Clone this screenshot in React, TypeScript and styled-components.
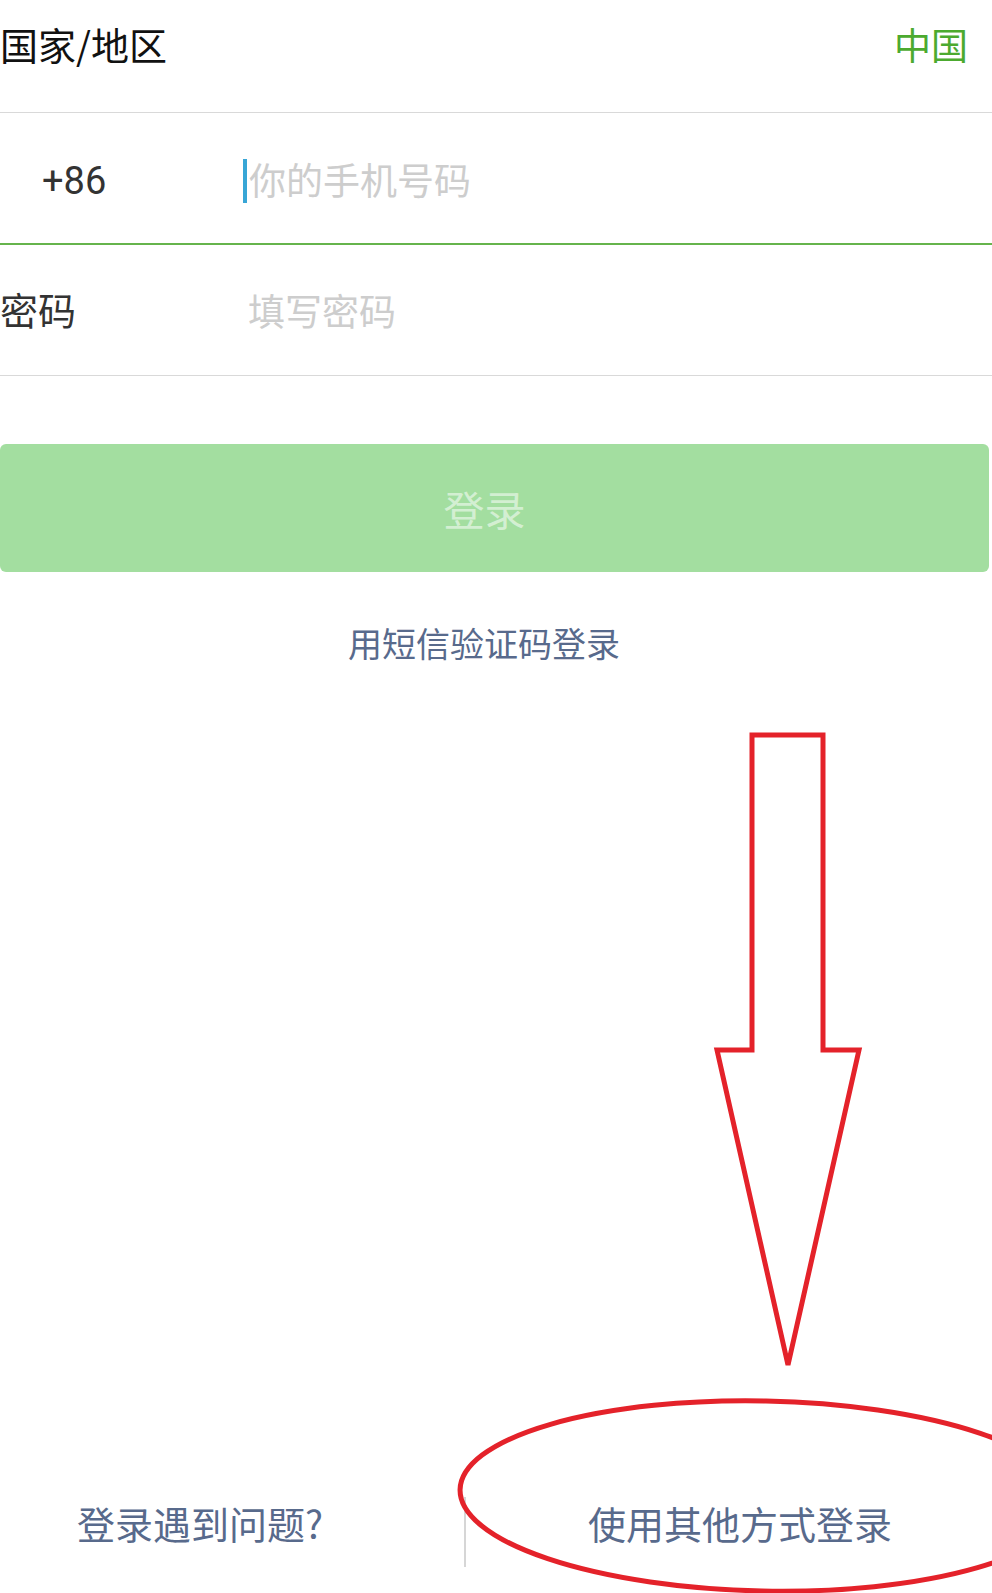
import React from "react";
import styled, { createGlobalStyle } from "styled-components";

const GlobalStyle = createGlobalStyle`
  html, body {
    margin: 0;
    padding: 0;
    background: #ffffff;
  }
  * { box-sizing: border-box; }
`;

const Page = styled.div`
  position: relative;
  width: 992px;
  height: 1593px;
  overflow: hidden;
  display: flex;
  flex-direction: column;
  background: #ffffff;
  font-family: "Noto Sans CJK SC", "Noto Sans", sans-serif;
`;

const CountryRow = styled.div`
  height: 113px;
  padding: 25px 24px 0 0;
  display: flex;
  justify-content: space-between;
  align-items: flex-start;
  border-bottom: 1px solid #d9d9d9;
`;

const Label = styled.span<{ $dark?: boolean }>`
  font-size: 38px;
  line-height: 38px;
  color: ${(p) => (p.$dark ? "#111111" : "#333333")};
  white-space: nowrap;
`;

const CountryValue = styled.span`
  font-size: 37px;
  line-height: 38px;
  color: #4caa2f;
`;

const FieldRow = styled.div<{ $active?: boolean; $h: number; $pt: number }>`
  height: ${(p) => p.$h}px;
  padding-top: ${(p) => p.$pt}px;
  display: flex;
  align-items: center;
  border-bottom: ${(p) => (p.$active ? "2px solid #66b44c" : "1px solid #d9d9d9")};
`;

const Prefix = styled.div<{ $indent: number }>`
  width: 243px;
  padding-left: ${(p) => p.$indent}px;
  flex-shrink: 0;
`;

const Code = styled.span`
  font-family: Roboto, "Noto Sans", sans-serif;
  font-size: 38px;
  line-height: 38px;
  color: #333333;
`;

const InputWrap = styled.div`
  display: flex;
  align-items: center;
  gap: 2px;
`;

const Caret = styled.span`
  width: 4px;
  height: 44px;
  background: #38a6d6;
`;

const Placeholder = styled.span<{ $offset: number; $lift: number }>`
  font-size: 37px;
  line-height: 38px;
  color: #cdcdcd;
  padding-left: ${(p) => p.$offset}px;
  padding-bottom: ${(p) => p.$lift}px;
  white-space: nowrap;
`;

const LoginButton = styled.button`
  margin-top: 68px;
  width: 989px;
  height: 128px;
  border: none;
  border-radius: 6px;
  background: #a3dea0;
  color: rgba(255, 255, 255, 0.55);
  font-family: "Noto Sans CJK SC", sans-serif;
  font-size: 41px;
  line-height: 41px;
  padding: 0 20px 0 0;
  display: flex;
  align-items: center;
  justify-content: center;
`;

const SmsLink = styled.div`
  margin-top: 51px;
  padding-right: 24px;
  text-align: center;
  font-size: 34px;
  line-height: 40px;
  color: #586a8c;
`;

const BottomBar = styled.div`
  margin-top: auto;
  height: 96px;
  display: flex;
  align-items: flex-start;
`;

const BottomCell = styled.div<{ $w: number; $pl: number }>`
  width: ${(p) => p.$w}px;
  padding-left: ${(p) => p.$pl}px;
  font-size: 38px;
  line-height: 52px;
  color: #586a8c;
  white-space: nowrap;
`;

const Divider = styled.div`
  width: 2px;
  height: 70px;
  background: #d6d6d6;
`;

const Annotation = styled.svg`
  position: absolute;
  left: 0;
  top: 0;
  pointer-events: none;
`;

export default function App() {
  return (
    <>
      <GlobalStyle />
      <Page>
        <CountryRow>
          <Label $dark>国家/地区</Label>
          <CountryValue>中国</CountryValue>
        </CountryRow>
        <FieldRow $active $h={132} $pt={5}>
          <Prefix $indent={42}>
            <Code>+86</Code>
          </Prefix>
          <InputWrap>
            <Caret />
            <Placeholder $offset={0} $lift={4}>你的手机号码</Placeholder>
          </InputWrap>
        </FieldRow>
        <FieldRow $h={131} $pt={0}>
          <Prefix $indent={0}>
            <Label>密码</Label>
          </Prefix>
          <Placeholder $offset={5} $lift={0}>填写密码</Placeholder>
        </FieldRow>
        <LoginButton>登录</LoginButton>
        <SmsLink>用短信验证码登录</SmsLink>
        <BottomBar>
          <BottomCell $w={464} $pl={77}>登录遇到问题?</BottomCell>
          <Divider />
          <BottomCell $w={526} $pl={122}>使用其他方式登录</BottomCell>
        </BottomBar>
        <Annotation width="992" height="1593" viewBox="0 0 992 1593">
          <polygon
            points="752,735 823,735 823,1050 859,1050 788,1365 717,1050 752,1050"
            fill="none"
            stroke="#e4222a"
            strokeWidth="5"
            strokeLinejoin="miter"
          />
          <ellipse
            cx="764"
            cy="1496"
            rx="304"
            ry="95"
            transform="rotate(1.2 764 1496)"
            fill="none"
            stroke="#e4222a"
            strokeWidth="5"
          />
        </Annotation>
      </Page>
    </>
  );
}
